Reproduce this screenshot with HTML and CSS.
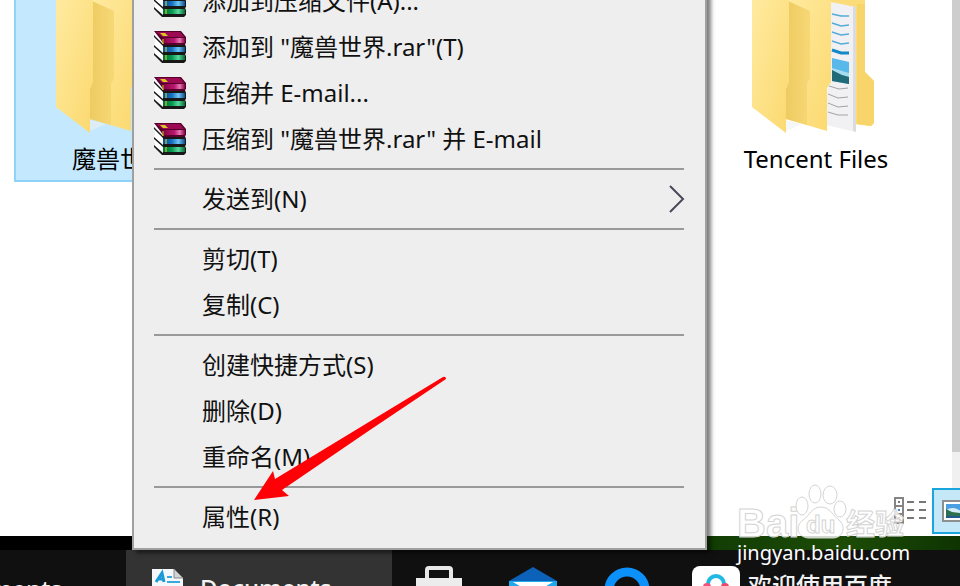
FILE: index.html
```html
<!DOCTYPE html>
<html lang="zh-CN">
<head>
    <meta charset="UTF-8">
    <meta name="viewport" content="width=device-width, initial-scale=1.0">
    <title>属性</title>
    <link rel="stylesheet" href="styles.css">
</head>
<body>
<!-- Iconos compartidos -->
<svg class="sprites" width="0" height="0" aria-hidden="true">
    <defs>
        <linearGradient id="flap" x1="0" y1="0" x2="1" y2="1">
            <stop offset="0" stop-color="#ffeaa0"/>
            <stop offset="1" stop-color="#fbd96f"/>
        </linearGradient>
        <linearGradient id="inner" x1="0" y1="0" x2="1" y2="0">
            <stop offset="0" stop-color="#eecb62"/>
            <stop offset="1" stop-color="#f7d875"/>
        </linearGradient>
        <linearGradient id="magenta" x1="0" y1="0" x2="1" y2="0">
            <stop offset="0" stop-color="#8a0448"/>
            <stop offset="0.5" stop-color="#b81870"/>
            <stop offset="0.75" stop-color="#e878b4"/>
            <stop offset="1" stop-color="#800040"/>
        </linearGradient>
        <linearGradient id="blue" x1="0" y1="0" x2="1" y2="0">
            <stop offset="0" stop-color="#0a4c94"/>
            <stop offset="0.4" stop-color="#1470c0"/>
            <stop offset="0.7" stop-color="#70c4f4"/>
            <stop offset="1" stop-color="#0a4c8c"/>
        </linearGradient>
        <linearGradient id="green" x1="0" y1="0" x2="1" y2="0">
            <stop offset="0" stop-color="#007038"/>
            <stop offset="0.4" stop-color="#049850"/>
            <stop offset="0.7" stop-color="#58d89c"/>
            <stop offset="1" stop-color="#006830"/>
        </linearGradient>
    </defs>
    <symbol id="rar" viewBox="0 0 32 32">
        <path d="M0 1 9 8V31L1 24V20L0 17V13L1 11Z" fill="#fff"/>
        <path d="M9 13H31L32 16V22L31 23 32 25V30L30 32H8L0 24V22L9 30V24L0 16V14L9 22V15L0 6V4Z" fill="#181818"/>
        <path d="M0 0H27L32 6V12L30 14H10L7 9Z" fill="#58002c"/>
        <path d="M2 1H26L30 6H9Z" fill="#9c0a54"/>
        <path d="M10 7H31V12H10Z" fill="url(#magenta)"/>
        <path d="M9 16H31V21H9Z" fill="url(#blue)"/>
        <path d="M9 24H31V29H9Z" fill="url(#green)"/>
        <path d="M6 2H11L14 5H9Z" fill="#d8c820"/>
        <path d="M9 8V13M12 16V21M12 24V29" stroke="#e8e020" stroke-width="1"/>
    </symbol>
    <symbol id="folder" viewBox="0 0 128 134">
        <path d="M37 0H79V82L75 88V131L34 119Z" fill="url(#flap)"/>
        <path d="M36 1 58 11V78L55 84V125L34 119V89L36 82Z" fill="url(#inner)"/>
        <path d="M0 0H37V82L34 89V133L0 107Z" fill="url(#flap)"/>
        <path d="M34 120 50 124 34 131Z" fill="#eef0f2" opacity="0.6"/>
    </symbol>
</svg>

<div class="desktop">
    <!-- Explorador -->
    <main class="explorer">
        <div class="explorer-body">
            <div class="files">
                <a class="file selected" href="#wow">
                    <svg class="file-icon" width="128" height="134" aria-hidden="true"><use href="#folder"/></svg>
                    <span>魔兽世界</span>
                </a>
                <a class="file last" href="#tencent">
                    <svg class="file-icon" viewBox="0 0 128 134" width="128" height="134" aria-hidden="true">
                        <path d="M78 0H113V72L122 81V123L119 126L85 122Z" fill="#fbdc78"/>
                        <path d="M105 4H113V72L122 81V123L119 126L105 124Z" fill="#f8d56b"/>
                        <path d="M79 2 104 7V132L74 125Z" fill="#f1f1f3"/>
                        <path d="M101 6 104 7V132L101 131Z" fill="#dcdcdf"/>
                        <g fill="none" stroke="#55acd8" stroke-width="1.5">
                            <path d="M80 14 89 16 97 16M80 23 89 26 97 25M80 32 89 35 97 34M80 41 89 44 97 43"/>
                            <path d="M80 50 89 53 97 53" stroke="#1488c8" stroke-width="3"/>
                        </g>
                        <path d="M80 58 97 62V84L80 81Z" fill="#58b8ea"/>
                        <path d="M80 68 97 73V77L80 74Z" fill="#a8dcf0"/>
                        <path d="M80 70 90 75 97 77V84L80 81Z" fill="#226b78"/>
                        <path d="M77 86 87 89 96 88M76 94 86 98 96 97M76 103 86 107 96 106M76 112 86 115 96 115" fill="none" stroke="#a2a2a6"/>
                        <use href="#folder"/>
                    </svg>
                    <span>Tencent Files</span>
                </a>
            </div>
            <div class="scrollbar"><div class="thumb"></div></div>
        </div>
        <div class="statusbar">
            <button class="view-btn" aria-label="详细信息">
                <svg width="34" height="28" viewBox="0 0 34 28" aria-hidden="true">
                    <path d="M1 1H9V26H1ZM1 9H9M1 17H9" fill="#fff" stroke="#858585" stroke-width="2"/>
                    <path d="M4 5H6" stroke="#777" stroke-width="2"/>
                    <path d="M4 13H6" stroke="#3c8ad0" stroke-width="2"/>
                    <path d="M4 21H6" stroke="#d23c50" stroke-width="2"/>
                    <path d="M13 5H20M25 5H32M13 13H20M25 13H32M13 21H20M25 21H32" stroke="#777" stroke-width="2"/>
                </svg>
            </button>
            <button class="view-btn active" aria-label="大图标">
                <svg width="32" height="22" viewBox="0 0 32 22" aria-hidden="true">
                    <path d="M1 1H31V21H1Z" fill="#fff" stroke="#8e8e8e" stroke-width="2"/>
                    <path d="M4 4H28V18H4Z" fill="#4b9fe0"/>
                    <path d="M4 10Q11 6 17 10T28 12V14H4Z" fill="#d6ecf8"/>
                    <path d="M4 9 10 12 28 14V16H4Z" fill="#2c7050"/>
                    <path d="M4 16H28V18H4Z" fill="#225a90"/>
                </svg>
            </button>
        </div>
    </main>

    <div class="wallpaper"></div>

    <!-- Barra de tareas -->
    <footer class="taskbar">
        <button class="task first">ments</button>
        <button class="task open">
            <svg width="32" height="32" viewBox="0 0 32 32" aria-hidden="true">
                <path d="M0 0H22L31 9V32H0Z" fill="#f4f8fa"/>
                <path d="M22 0V9H31Z" fill="#cfd4d6" stroke="#888"/>
                <path d="M4 13 10 4 12 13M7 10H12" fill="none" stroke="#1a9ad6" stroke-width="3"/>
                <path d="M15 8H20M15 13H28M4 18H28" stroke="#3aa8dc" stroke-width="2"/>
            </svg>
            <span>Documents</span>
        </button>
        <button class="task icon" aria-label="商店">
            <svg width="48" height="40" viewBox="0 0 48 40" aria-hidden="true">
                <path d="M12 12V4Q12 2 14 2H34Q36 2 36 4V12" fill="none" stroke="#e8e8e8" stroke-width="4"/>
                <path d="M1 12H47V40H1Z" fill="#ececec"/>
            </svg>
        </button>
        <button class="task icon" aria-label="邮件">
            <svg width="48" height="40" viewBox="0 0 48 40" aria-hidden="true">
                <path d="M0 15 24 1 48 15V40H0Z" fill="#0b62b8"/>
                <path d="M0 15H48V40H0Z" fill="#1fa8ee"/>
                <path d="M4 16H44L24 28Z" fill="#fff"/>
            </svg>
        </button>
        <button class="task icon" aria-label="浏览器">
            <svg width="48" height="40" viewBox="0 0 48 40" aria-hidden="true">
                <circle cx="24" cy="24" r="18" fill="none" stroke="#0c90fa" stroke-width="9"/>
            </svg>
        </button>
        <button class="task baidu">
            <svg width="48" height="40" viewBox="0 0 48 40" aria-hidden="true">
                <rect width="48" height="48" rx="8" fill="#fff"/>
                <circle cx="24" cy="18" r="8" fill="none" stroke="#22b8e4" stroke-width="4"/>
                <circle cx="15" cy="21" r="4" fill="#f0527a"/>
                <circle cx="33" cy="21" r="4" fill="#ee4868"/>
            </svg>
            <span>欢迎使用百度</span>
        </button>
    </footer>

    <!-- Menú contextual -->
    <div class="menu" role="menu">
        <button class="menu-item" role="menuitem"><svg class="menu-icon"><use href="#rar"/></svg>添加到压缩文件(A)...</button>
        <button class="menu-item" role="menuitem"><svg class="menu-icon"><use href="#rar"/></svg>添加到 "魔兽世界.rar"(T)</button>
        <button class="menu-item" role="menuitem"><svg class="menu-icon"><use href="#rar"/></svg>压缩并 E-mail...</button>
        <button class="menu-item" role="menuitem"><svg class="menu-icon"><use href="#rar"/></svg>压缩到 "魔兽世界.rar" 并 E-mail</button>
        <hr>
        <button class="menu-item" role="menuitem">发送到(N)
            <svg class="chevron" width="16" height="28" viewBox="0 0 16 28" aria-hidden="true">
                <path d="M1 1 14 14 1 27" fill="none" stroke="#4c4658" stroke-width="2"/>
            </svg>
        </button>
        <hr>
        <button class="menu-item" role="menuitem">剪切(T)</button>
        <button class="menu-item" role="menuitem">复制(C)</button>
        <hr>
        <button class="menu-item" role="menuitem">创建快捷方式(S)</button>
        <button class="menu-item" role="menuitem">删除(D)</button>
        <button class="menu-item" role="menuitem">重命名(M)</button>
        <hr>
        <button class="menu-item" role="menuitem">属性(R)</button>
    </div>

    <!-- Flecha -->
    <svg class="arrow" width="200" height="130" viewBox="0 0 200 130" aria-hidden="true">
        <path d="M4 128 23 99 25 107 193 5Q196 4 196 7L117 60 32 118 39 124Z" fill="#fe0006"/>
    </svg>

    <!-- Marca de agua -->
    <div class="watermark">
        <svg width="176" height="56" viewBox="0 0 176 56" aria-hidden="true">
            <g class="outline">
                <text class="logo" x="0" y="53">Bai</text>
                <ellipse cx="65" cy="22" rx="6" ry="9"/>
                <ellipse cx="78" cy="10" rx="6" ry="9"/>
                <ellipse cx="93" cy="11" rx="7" ry="9"/>
                <ellipse cx="103" cy="25" rx="6" ry="8"/>
                <path d="M84 23C93 23 96 32 103 37C109 43 106 54 96 54H71C60 53 58 42 66 36C73 31 75 23 84 23Z"/>
                <text class="logo-du" x="69" y="49">du</text>
                <text class="logo-cn" x="109" y="51">经验</text>
            </g>
        </svg>
        <span>jingyan.baidu.com</span>
    </div>
</div>
</body>
</html>
```

FILE: styles.css
```css
* {
    box-sizing: border-box;
}
body {
    margin: 0;
    font-family: "Noto Sans", "Noto Sans CJK SC", sans-serif;
    font-size: 24px;
    line-height: 32px;
    color: #111;
}
button {
    font: inherit;
    color: inherit;
    background: none;
    border: none;
    padding: 0;
}
svg {
    flex-shrink: 0;
}
.sprites {
    position: absolute;
}
.desktop {
    position: relative;
    display: flex;
    flex-direction: column;
    height: 100vh;
    overflow: hidden;
    background-color: #101010;
}

/* Explorador */
.explorer {
    flex: 1;
    display: flex;
    flex-direction: column;
    background-color: #fff;
}
.explorer-body {
    flex: 1;
    display: flex;
}
.files {
    flex: 1;
    display: grid;
    grid-template-columns: repeat(4, 1fr);
    align-items: start;
    gap: 20px;
    padding: 0 30px 0 14px;
}
.file {
    display: flex;
    flex-direction: column;
    align-items: center;
    gap: 9px;
    padding-bottom: 5px;
    border: 2px solid transparent;
    border-top: none;
    color: #000;
    text-decoration: none;
}
.file.selected {
    background-color: #c4e8fd;
    border-color: #8fd3f7;
}
.file.last {
    grid-column: 4;
}
.scrollbar {
    width: 8px;
    background-color: #f0f0f0;
}
.thumb {
    height: calc(100% - 36px);
    background-color: #cdcdcd;
}
.statusbar {
    display: flex;
    justify-content: flex-end;
    align-items: center;
    gap: 4px;
    height: 48px;
    padding-bottom: 2px;
}
.view-btn {
    display: flex;
    align-items: center;
}
.view-btn.active {
    width: 28px;
    height: 46px;
    padding-left: 8px;
    overflow: hidden;
    background-color: #c4e8f8;
    border: 2px solid #1aa5dc;
    border-right: none;
}
.wallpaper {
    height: 14px;
    background: linear-gradient(90deg, #000 0 60%, #123d04 74%, #1c4c06 88%, #0e3402);
}

/* Barra de tareas */
.taskbar {
    display: flex;
    align-items: flex-start;
    height: 36px;
    overflow: hidden;
    color: #f2f2f2;
    font-weight: 500;
}
.task {
    display: flex;
    flex-shrink: 0;
    padding-top: 16px;
}
.task span {
    padding-top: 4px;
}
.task.first {
    justify-content: flex-end;
    width: 126px;
    padding-top: 23px;
    padding-right: 64px;
}
.task.open {
    width: 266px;
    gap: 16px;
    padding: 19px 0 0 26px;
    background-color: #333;
}
.task.open span {
    padding-top: 3px;
}
.task.icon {
    width: 94px;
    justify-content: center;
}
.task.baidu {
    gap: 8px;
    margin-left: 18px;
}

/* Menú contextual */
.menu {
    position: absolute;
    left: 132px;
    bottom: 36px;
    width: 575px;
    padding-bottom: 8px;
    background-color: #eee;
    border: 2px solid #a0a0a0;
    border-top: none;
    box-shadow: 4px 3px 4px rgba(0, 0, 0, 0.5);
}
.menu-item {
    display: flex;
    align-items: center;
    width: 100%;
    height: 46px;
    padding-left: 68px;
    text-align: left;
}
.menu-icon {
    width: 32px;
    height: 32px;
    margin-left: -48px;
    margin-right: 16px;
}
.chevron {
    margin-left: auto;
    margin-right: 20px;
}
.menu hr {
    height: 2px;
    margin: 6px 21px 6px 20px;
    border: none;
    background-color: #999;
}

.arrow {
    position: absolute;
    left: 250px;
    top: 372px;
}

/* Marca de agua */
.watermark {
    position: absolute;
    right: 46px;
    bottom: 20px;
    width: 177px;
    color: #fff;
    font-size: 20px;
    line-height: 26px;
}
.watermark svg {
    display: block;
}
.outline {
    fill: rgba(255, 255, 255, 0.8);
    stroke: #d4d4d4;
    stroke-width: 1;
}
.logo {
    font: bold 40px "Liberation Sans", sans-serif;
}
.logo-du {
    font: bold 24px "Liberation Sans", sans-serif;
}
.logo-cn {
    font: bold 29px "Noto Sans CJK SC", sans-serif;
}
```
